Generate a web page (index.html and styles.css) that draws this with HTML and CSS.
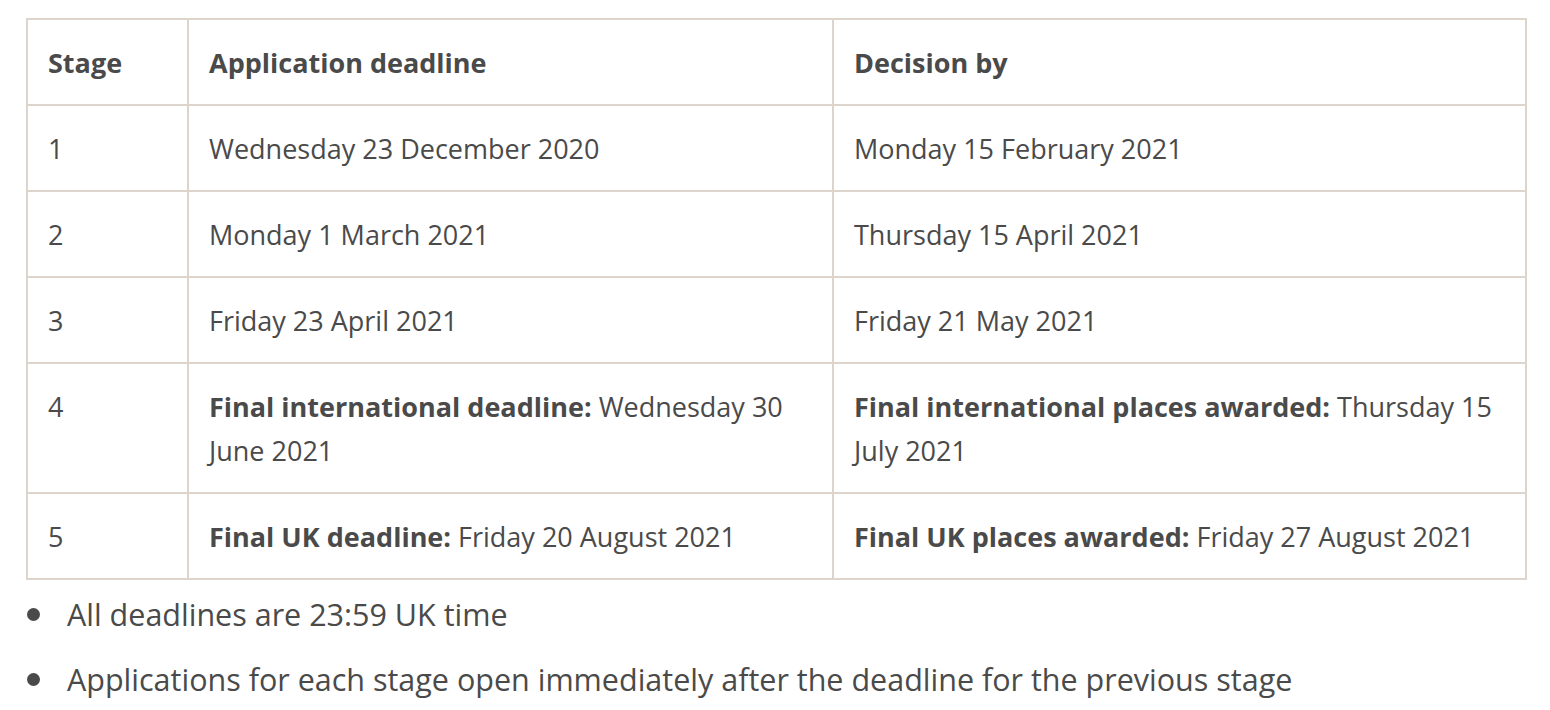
FILE: index.html
```html
<!DOCTYPE html>
<html>
<head>
<meta charset="utf-8">
<link rel="stylesheet" href="styles.css">
</head>
<body>
<div class="page">
  <table class="deadlines">
    <colgroup>
      <col class="c-stage">
      <col class="c-app">
      <col class="c-dec">
    </colgroup>
    <thead>
      <tr><th>Stage</th><th>Application deadline</th><th>Decision by</th></tr>
    </thead>
    <tbody>
      <tr><td>1</td><td>Wednesday 23 December 2020</td><td>Monday 15 February 2021</td></tr>
      <tr><td>2</td><td>Monday 1 March 2021</td><td>Thursday 15 April 2021</td></tr>
      <tr><td>3</td><td>Friday 23 April 2021</td><td>Friday 21 May 2021</td></tr>
      <tr><td>4</td><td><strong>Final international deadline:</strong> Wednesday 30 June 2021</td><td><strong>Final international places awarded:</strong> Thursday 15 July 2021</td></tr>
      <tr><td>5</td><td><strong>Final UK deadline:</strong> Friday 20 August 2021</td><td><strong>Final UK places awarded:</strong> Friday 27 August 2021</td></tr>
    </tbody>
  </table>
  <ul class="notes">
    <li>All deadlines are 23:59 UK time</li>
    <li>Applications for each stage open immediately after the deadline for the previous stage</li>
  </ul>
</div>
</body>
</html>
```

FILE: styles.css
```css
html, body {
  margin: 0;
  padding: 0;
  background: #ffffff;
}
.page {
  padding: 18px 0 0 26px;
  font-family: "Open Sans", "Noto Sans", sans-serif;
  color: #4a4a4a;
  font-size: 27px;
  line-height: 44px;
}
.deadlines {
  border-collapse: collapse;
  table-layout: fixed;
  width: 1499px;
}
.c-stage { width: 161px; }
.c-app { width: 645px; }
.c-dec { width: 693px; }
.deadlines th,
.deadlines td {
  border: 2px solid #ddd5cb;
  padding: 21px 20px 19px;
  text-align: left;
  vertical-align: top;
}
.deadlines th,
.deadlines strong {
  font-weight: 700;
}
.notes {
  list-style: none;
  margin: 12px 0 0 0;
  padding: 0;
  font-size: 30.5px;
}
.notes li {
  display: flex;
  align-items: center;
  padding-bottom: 21px;
}
.notes li::before {
  content: "";
  flex: none;
  width: 13px;
  height: 13px;
  border-radius: 50%;
  background: #4a4a4a;
  margin: 0 27px 0 1px;
}
```
